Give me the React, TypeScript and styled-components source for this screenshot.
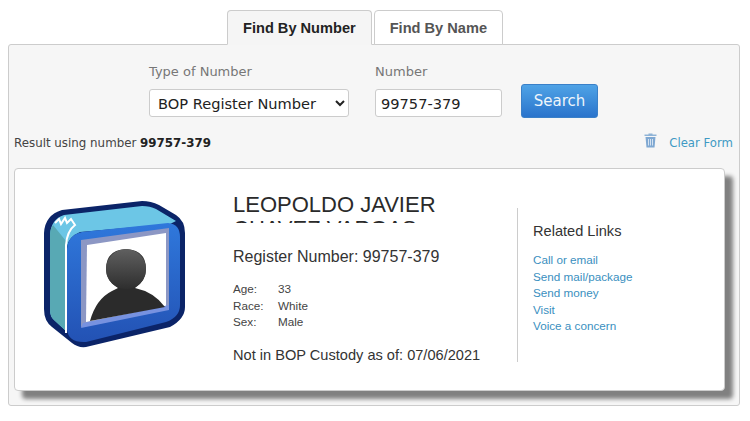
import { createGlobalStyle, styled } from 'styled-components';

const GlobalStyle = createGlobalStyle`
  html, body {
    margin: 0;
    padding: 0;
    background: #fff;
  }
`;

const Page = styled.div`
  width: 750px;
  height: 421px;
  box-sizing: border-box;
  padding: 10px 10px 0 8px;
  overflow: hidden;
`;

const Tabs = styled.div`
  display: flex;
  gap: 2px;
  padding-left: 219px;
  position: relative;
  z-index: 1;
  margin-bottom: -1px;
`;

const Tab = styled.div<{ $active?: boolean }>`
  box-sizing: border-box;
  height: 35px;
  padding: 0 15px;
  display: flex;
  align-items: center;
  border: 1px solid #ccc;
  border-bottom-color: ${(p) => (p.$active ? '#f5f5f5' : '#ccc')};
  border-radius: 4px 4px 0 0;
  background: ${(p) => (p.$active ? '#f5f5f5' : '#fff')};
  color: ${(p) => (p.$active ? '#222' : '#555')};
  font: bold 14.6px 'Liberation Sans', Arial, sans-serif;
`;

const Panel = styled.div`
  box-sizing: border-box;
  width: 732px;
  height: 362px;
  background: #f6f6f6;
  border: 1px solid #ccc;
  border-radius: 3px;
  padding: 0 6px 0 5px;
`;

const SearchForm = styled.div`
  box-sizing: border-box;
  display: flex;
  align-items: flex-start;
  padding: 19px 0 0 135px;
  height: 83px;
`;

const Field = styled.div<{ $width: number }>`
  width: ${(p) => p.$width}px;
  margin-right: 26px;
`;

const FieldLabel = styled.div`
  font: 13px 'DejaVu Sans', Verdana, sans-serif;
  color: #777;
  line-height: 16px;
  margin-bottom: 9px;
`;

const Select = styled.select`
  box-sizing: border-box;
  width: 100%;
  height: 28px;
  padding: 0 4px;
  border: 1px solid #ccc;
  border-radius: 3px;
  background: #fff;
  color: #222;
  font: 14.6px 'DejaVu Sans', Verdana, sans-serif;
`;

const NumberInput = styled.input`
  box-sizing: border-box;
  width: 100%;
  height: 28px;
  padding: 0 5px;
  border: 1px solid #ccc;
  border-radius: 3px;
  background: #fff;
  color: #222;
  font: 14.6px 'DejaVu Sans', Verdana, sans-serif;
`;

const SearchButton = styled.button`
  box-sizing: border-box;
  width: 77px;
  height: 34px;
  margin: 20px 0 0 -7px;
  border: 1px solid #3a80c8;
  border-radius: 3px;
  background: linear-gradient(#4fa3e6, #2a74cc);
  color: #eef5fb;
  font: 15px 'DejaVu Sans', Verdana, sans-serif;
`;

const ResultBar = styled.div`
  display: flex;
  align-items: center;
  justify-content: space-between;
  height: 30px;
  font: 11.85px 'DejaVu Sans', Verdana, sans-serif;
  color: #444;

  b {
    color: #222;
  }
`;

const ClearForm = styled.a`
  display: flex;
  align-items: center;
  gap: 12px;
  color: #3f9ac4;
  font-size: 11.7px;

  svg {
    margin-top: -5px;
  }
`;

const Card = styled.div`
  box-sizing: border-box;
  width: 711px;
  height: 223px;
  margin-top: 10px;
  display: flex;
  background: #fff;
  border: 1px solid #ccc;
  border-radius: 4px;
  box-shadow: 8px 8px 4px #808080;
  font-family: 'Liberation Sans', Arial, sans-serif;
`;

const PhotoCol = styled.div`
  width: 218px;
  padding: 32px 0 0 29px;
  box-sizing: border-box;
`;

const InfoCol = styled.div`
  width: 284px;
  padding-top: 24px;
  color: #333;
`;

const Name = styled.div`
  height: 30px;
  overflow: hidden;
  font-size: 22px;
  line-height: 24px;
  color: #2a2a2a;
`;

const RegisterNumber = styled.div`
  margin-top: 24px;
  font-size: 16px;
  line-height: 20px;
`;

const Details = styled.div`
  margin-top: 14px;
  display: grid;
  grid-template-columns: 45px 1fr;
  font-size: 11.7px;
  line-height: 16.5px;
  color: #444;
`;

const Status = styled.div`
  margin-top: 15.5px;
  font-size: 14.6px;
  line-height: 18px;
`;

const LinksCol = styled.div`
  align-self: flex-start;
  margin-top: 39px;
  height: 154px;
  box-sizing: border-box;
  border-left: 1px solid #ccc;
  padding: 14px 0 0 15px;
`;

const LinksTitle = styled.div`
  font-size: 14.6px;
  line-height: 18px;
  color: #333;
  margin-bottom: 12px;
`;

const LinkItem = styled.a`
  display: block;
  font-size: 11.7px;
  line-height: 16.5px;
  color: #3a8fc0;
`;

function TrashIcon() {
  return (
    <svg width="13" height="15" viewBox="0 0 13 15">
      <path d="M4.500 0.500h4v1h4v1.500H.5V1.500h4z" fill="#8fb3d6" />
      <path d="M1.500 4h10l-1 10.500h-8z" fill="#7fa8d2" />
      <path d="M4.500 6v6.500M6.500 6v6.500M8.500 6v6.500" stroke="#d5e2f0" strokeWidth="1" />
    </svg>
  );
}

function InmateIcon() {
  return (
    <svg width="144" height="148" viewBox="0 0 144 148">
      <defs>
        <linearGradient id="frameFill" x1="0" y1="0" x2="0" y2="1">
          <stop offset="0" stopColor="#2f78dc" />
          <stop offset="1" stopColor="#2352b4" />
        </linearGradient>
        <linearGradient id="headFill" x1="0" y1="0" x2="0" y2="1">
          <stop offset="0" stopColor="#606060" />
          <stop offset="1" stopColor="#2e2e2e" />
        </linearGradient>
      </defs>
      <path
        d="M18 9 L98 0 Q107 0 115 4 L132 14 Q141 20 141 32 L141 106 Q141 118 126 126 L42 146 Q34 147 28 142 L8 126 Q0 120 0 108 L0 32 Q1 14 18 9Z"
        fill="#0b2468"
      />
      <path d="M20 14 L98 5 Q106 5 112 8 L132 20 L126 23 L36 31 Q24 36 23 46 L22 130 L10 119 Q6 116 6 108 L6 34 Q7 18 20 14Z" fill="#6cc6e6" />
      <path d="M6 34 Q6 28 9 24 L22 40 L22 130 L10 119 Q6 116 6 108Z" fill="#58a9b4" />
      <path d="M11 22 L15 18 L17 23 L21 17 L23 22 L27 18 L31 24 Q23 30 22 44 L22 132" fill="none" stroke="#fff" strokeWidth="2" />
      <path
        d="M38 31 L124 22 Q136 23 136 36 L136 104 Q136 116 122 121 L42 141 Q24 142 23 128 L23 48 Q24 34 38 31Z"
        fill="url(#frameFill)"
      />
      <path d="M37 39 L125 27 L125 106 L37 126Z" fill="#8c97c4" />
      <path d="M43 44 L122 32 L122 106 L42 121Z" fill="#fff" />
      <path d="M39 122 L125 104 L125 109 L37 127Z" fill="#7792e0" />
      <path
        d="M46 120 Q52 98 68 90 L74 87 Q62 80 62 68 Q62 49 82 48 Q102 49 102 68 Q102 80 91 87 Q110 91 121 106Z"
        fill="#2b2b2b"
      />
      <ellipse cx="82" cy="68" rx="20" ry="20" fill="url(#headFill)" />
    </svg>
  );
}

export default function App() {
  return (
    <Page>
      <GlobalStyle />
      <Tabs>
        <Tab $active>Find By Number</Tab>
        <Tab>Find By Name</Tab>
      </Tabs>
      <Panel>
        <SearchForm>
          <Field $width={200}>
            <FieldLabel>Type of Number</FieldLabel>
            <Select defaultValue="bop">
              <option value="bop">BOP Register Number</option>
            </Select>
          </Field>
          <Field $width={127}>
            <FieldLabel>Number</FieldLabel>
            <NumberInput defaultValue="99757-379" />
          </Field>
          <SearchButton>Search</SearchButton>
        </SearchForm>
        <ResultBar>
          <span>
            Result using number <b>99757-379</b>
          </span>
          <ClearForm>
            <TrashIcon />
            Clear Form
          </ClearForm>
        </ResultBar>
        <Card>
          <PhotoCol>
            <InmateIcon />
          </PhotoCol>
          <InfoCol>
            <Name>
              LEOPOLDO JAVIER
              <br />
              CHAVEZ VARGAS
            </Name>
            <RegisterNumber>Register Number: 99757-379</RegisterNumber>
            <Details>
              <span>Age:</span>
              <span>33</span>
              <span>Race:</span>
              <span>White</span>
              <span>Sex:</span>
              <span>Male</span>
            </Details>
            <Status>Not in BOP Custody as of: 07/06/2021</Status>
          </InfoCol>
          <LinksCol>
            <LinksTitle>Related Links</LinksTitle>
            <LinkItem>Call or email</LinkItem>
            <LinkItem>Send mail/package</LinkItem>
            <LinkItem>Send money</LinkItem>
            <LinkItem>Visit</LinkItem>
            <LinkItem>Voice a concern</LinkItem>
          </LinksCol>
        </Card>
      </Panel>
    </Page>
  );
}
